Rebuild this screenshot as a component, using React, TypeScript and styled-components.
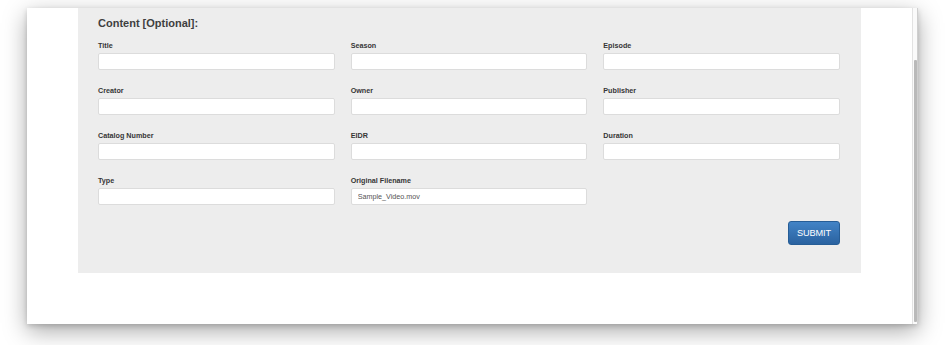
import React from "react";
import styled, { createGlobalStyle } from "styled-components";

const GlobalStyle = createGlobalStyle`
  html, body {
    margin: 0;
    padding: 0;
    background: #ffffff;
    font-family: "Liberation Sans", Arial, sans-serif;
  }
`;

type FieldDef = { label: string; value?: string };

const fields: (FieldDef | null)[] = [
  { label: "Title" },
  { label: "Season" },
  { label: "Episode" },
  { label: "Creator" },
  { label: "Owner" },
  { label: "Publisher" },
  { label: "Catalog Number" },
  { label: "EIDR" },
  { label: "Duration" },
  { label: "Type" },
  { label: "Original Filename", value: "Sample_Video.mov" },
  null,
];

const Stage = styled.div`
  box-sizing: border-box;
  height: 345px;
  padding: 8px 30px 0 27px;
  overflow: hidden;
`;

const Window = styled.div`
  display: flex;
  width: 891px;
  height: 316px;
  background: #ffffff;
  box-shadow: 0 7px 22px rgba(0, 0, 0, 0.34), 0 2px 5px rgba(0, 0, 0, 0.16);
`;

const Viewport = styled.div`
  flex: 1;
  display: flex;
  justify-content: center;
`;

const Panel = styled.form`
  box-sizing: border-box;
  width: 783px;
  height: 265px;
  background: #ededed;
  padding: 8px 21px 0 20px;
`;

const Heading = styled.h3`
  margin: 0 0 10px;
  font-size: 11px;
  line-height: 14px;
  font-weight: 700;
  color: #3f3f3f;
`;

const Grid = styled.div`
  display: grid;
  grid-template-columns: repeat(3, 1fr);
  column-gap: 16px;
  row-gap: 15px;
`;

const Field = styled.label`
  display: flex;
  flex-direction: column;
  gap: 2px;
`;

const LabelText = styled.span`
  font-size: 7.2px;
  line-height: 11px;
  font-weight: 700;
  color: #363636;
`;

const Input = styled.input`
  box-sizing: border-box;
  height: 17px;
  width: 100%;
  margin: 0;
  padding: 0 6px;
  border: 1px solid #dcdcdc;
  border-radius: 2px;
  background: #ffffff;
  font-family: "Liberation Sans", Arial, sans-serif;
  font-size: 7.2px;
  color: #555555;
  outline: none;
`;

const Actions = styled.div`
  display: flex;
  justify-content: flex-end;
  margin-top: 16px;
`;

const SubmitButton = styled.button`
  box-sizing: border-box;
  width: 52px;
  height: 24px;
  padding: 0;
  border: 1px solid #265d96;
  border-radius: 3px;
  background: linear-gradient(#4283c6, #2a62a0);
  color: #ffffff;
  font-family: "Liberation Sans", Arial, sans-serif;
  font-size: 9.2px;
  letter-spacing: -0.1px;
  cursor: pointer;
`;

const Scrollbar = styled.div`
  display: flex;
  flex-direction: column;
  align-items: center;
  width: 6px;
  border-left: 1px solid #e2e2e2;
  border-right: 1px solid #cfcfcf;
  background: #fafafa;
  box-sizing: border-box;
`;

const Thumb = styled.div`
  flex: 1;
  width: 3px;
  margin: 52px 0 2px 0;
  background: #b9b9b9;
  border-radius: 1px;
`;

export default function App() {
  return (
    <>
      <GlobalStyle />
      <Stage>
        <Window>
          <Viewport>
            <Panel onSubmit={(e) => e.preventDefault()}>
              <Heading>Content [Optional]:</Heading>
              <Grid>
                {fields.map((f, i) =>
                  f ? (
                    <Field key={i}>
                      <LabelText>{f.label}</LabelText>
                      <Input type="text" defaultValue={f.value} />
                    </Field>
                  ) : (
                    <div key={i} />
                  )
                )}
              </Grid>
              <Actions>
                <SubmitButton type="submit">SUBMIT</SubmitButton>
              </Actions>
            </Panel>
          </Viewport>
          <Scrollbar>
            <Thumb />
          </Scrollbar>
        </Window>
      </Stage>
    </>
  );
}
